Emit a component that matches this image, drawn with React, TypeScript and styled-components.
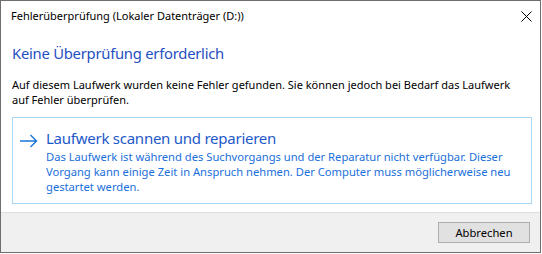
import styled, { createGlobalStyle } from 'styled-components';

const GlobalStyle = createGlobalStyle`
  html, body {
    margin: 0;
    padding: 0;
    background: #ffffff;
  }
  body {
    font-family: "Noto Sans", "Open Sans", "Liberation Sans", sans-serif;
    color: #000000;
  }
`;

// ===== WINDOW FRAME =====

const Window = styled.div`
  box-sizing: border-box;
  width: 541px;
  height: 253px;
  border: 1px solid #6e6e6e;
  background: #ffffff;
  display: flex;
  flex-direction: column;
`;

const TitleBar = styled.div`
  height: 30px;
  display: flex;
  align-items: center;
  justify-content: space-between;
  padding: 0 8px 0 10px;
  flex-shrink: 0;
`;

const TitleText = styled.span`
  font-size: 11px;
  line-height: 16px;
  color: #000000;
`;

const CloseButton = styled.div`
  width: 11px;
  height: 11px;
  display: flex;

  svg {
    width: 11px;
    height: 11px;
  }
`;

// ===== CONTENT =====

const Content = styled.div`
  flex: 1;
  display: flex;
  flex-direction: column;
  padding: 0 8px 0 11px;
`;

const MainInstruction = styled.h1`
  margin: 12px 0 0 0;
  font-size: 14.8px;
  letter-spacing: -0.25px;
  line-height: 21px;
  font-weight: 400;
  color: #1f4fc2;
`;

const BodyText = styled.p`
  margin: 13px 0 0 0;
  max-width: 500px;
  font-size: 11px;
  line-height: 15px;
  color: #000000;
`;

// Command link (hover state: light blue frame)
const CommandLink = styled.div`
  margin-top: 10px;
  border: 1px solid #a9d6f5;
  display: flex;
  align-items: flex-start;
  gap: 8px;
  padding: 10px 8px 9px 7px;
`;

const ArrowIcon = styled.div`
  width: 18px;
  height: 14px;
  margin-top: 6px;
  flex-shrink: 0;

  svg {
    width: 18px;
    height: 14px;
    display: block;
  }
`;

const LinkBody = styled.div`
  display: flex;
  flex-direction: column;
`;

const LinkTitle = styled.span`
  font-size: 15px;
  letter-spacing: -0.25px;
  line-height: 21px;
  color: #1d59c8;
`;

const LinkDescription = styled.span`
  font-size: 11.2px;
  line-height: 15px;
  color: #1a6fdb;
`;

// ===== FOOTER =====

const Footer = styled.div`
  height: 40px;
  flex-shrink: 0;
  border-top: 1px solid #dfdfdf;
  background: #f0f0f0;
  display: flex;
  justify-content: flex-end;
  align-items: flex-start;
  padding: 9px 10px 0 0;
  box-sizing: border-box;
`;

const Button = styled.button`
  width: 92px;
  height: 21px;
  box-sizing: border-box;
  border: 1px solid #adadad;
  background: #e1e1e1;
  font-family: inherit;
  font-size: 11.2px;
  color: #000000;
  padding: 0;
  line-height: 18px;
`;

export default function App() {
  return (
    <>
      <GlobalStyle />
      <Window>
        <TitleBar>
          <TitleText>Fehlerüberprüfung (Lokaler Datenträger (D:))</TitleText>
          <CloseButton>
            <svg viewBox="0 0 11 11">
              <path d="M0.5 0.5 L10.5 10.5 M10.5 0.5 L0.5 10.5" stroke="#000" strokeWidth="1" fill="none" />
            </svg>
          </CloseButton>
        </TitleBar>

        <Content>
          <MainInstruction>Keine Überprüfung erforderlich</MainInstruction>
          <BodyText>
            Auf diesem Laufwerk wurden keine Fehler gefunden. Sie können jedoch bei Bedarf das Laufwerk auf Fehler überprüfen.
          </BodyText>

          <CommandLink>
            <ArrowIcon>
              <svg viewBox="0 0 18 14">
                <path d="M0 7 H16.5 M10.5 1 L16.5 7 L10.5 13" stroke="#1a75d8" strokeWidth="1.4" fill="none" />
              </svg>
            </ArrowIcon>
            <LinkBody>
              <LinkTitle>Laufwerk scannen und reparieren</LinkTitle>
              <LinkDescription>
                Das Laufwerk ist während des Suchvorgangs und der Reparatur nicht verfügbar. Dieser Vorgang kann einige Zeit in Anspruch nehmen. Der Computer muss möglicherweise neu gestartet werden.
              </LinkDescription>
            </LinkBody>
          </CommandLink>
        </Content>

        <Footer>
          <Button>Abbrechen</Button>
        </Footer>
      </Window>
    </>
  );
}
